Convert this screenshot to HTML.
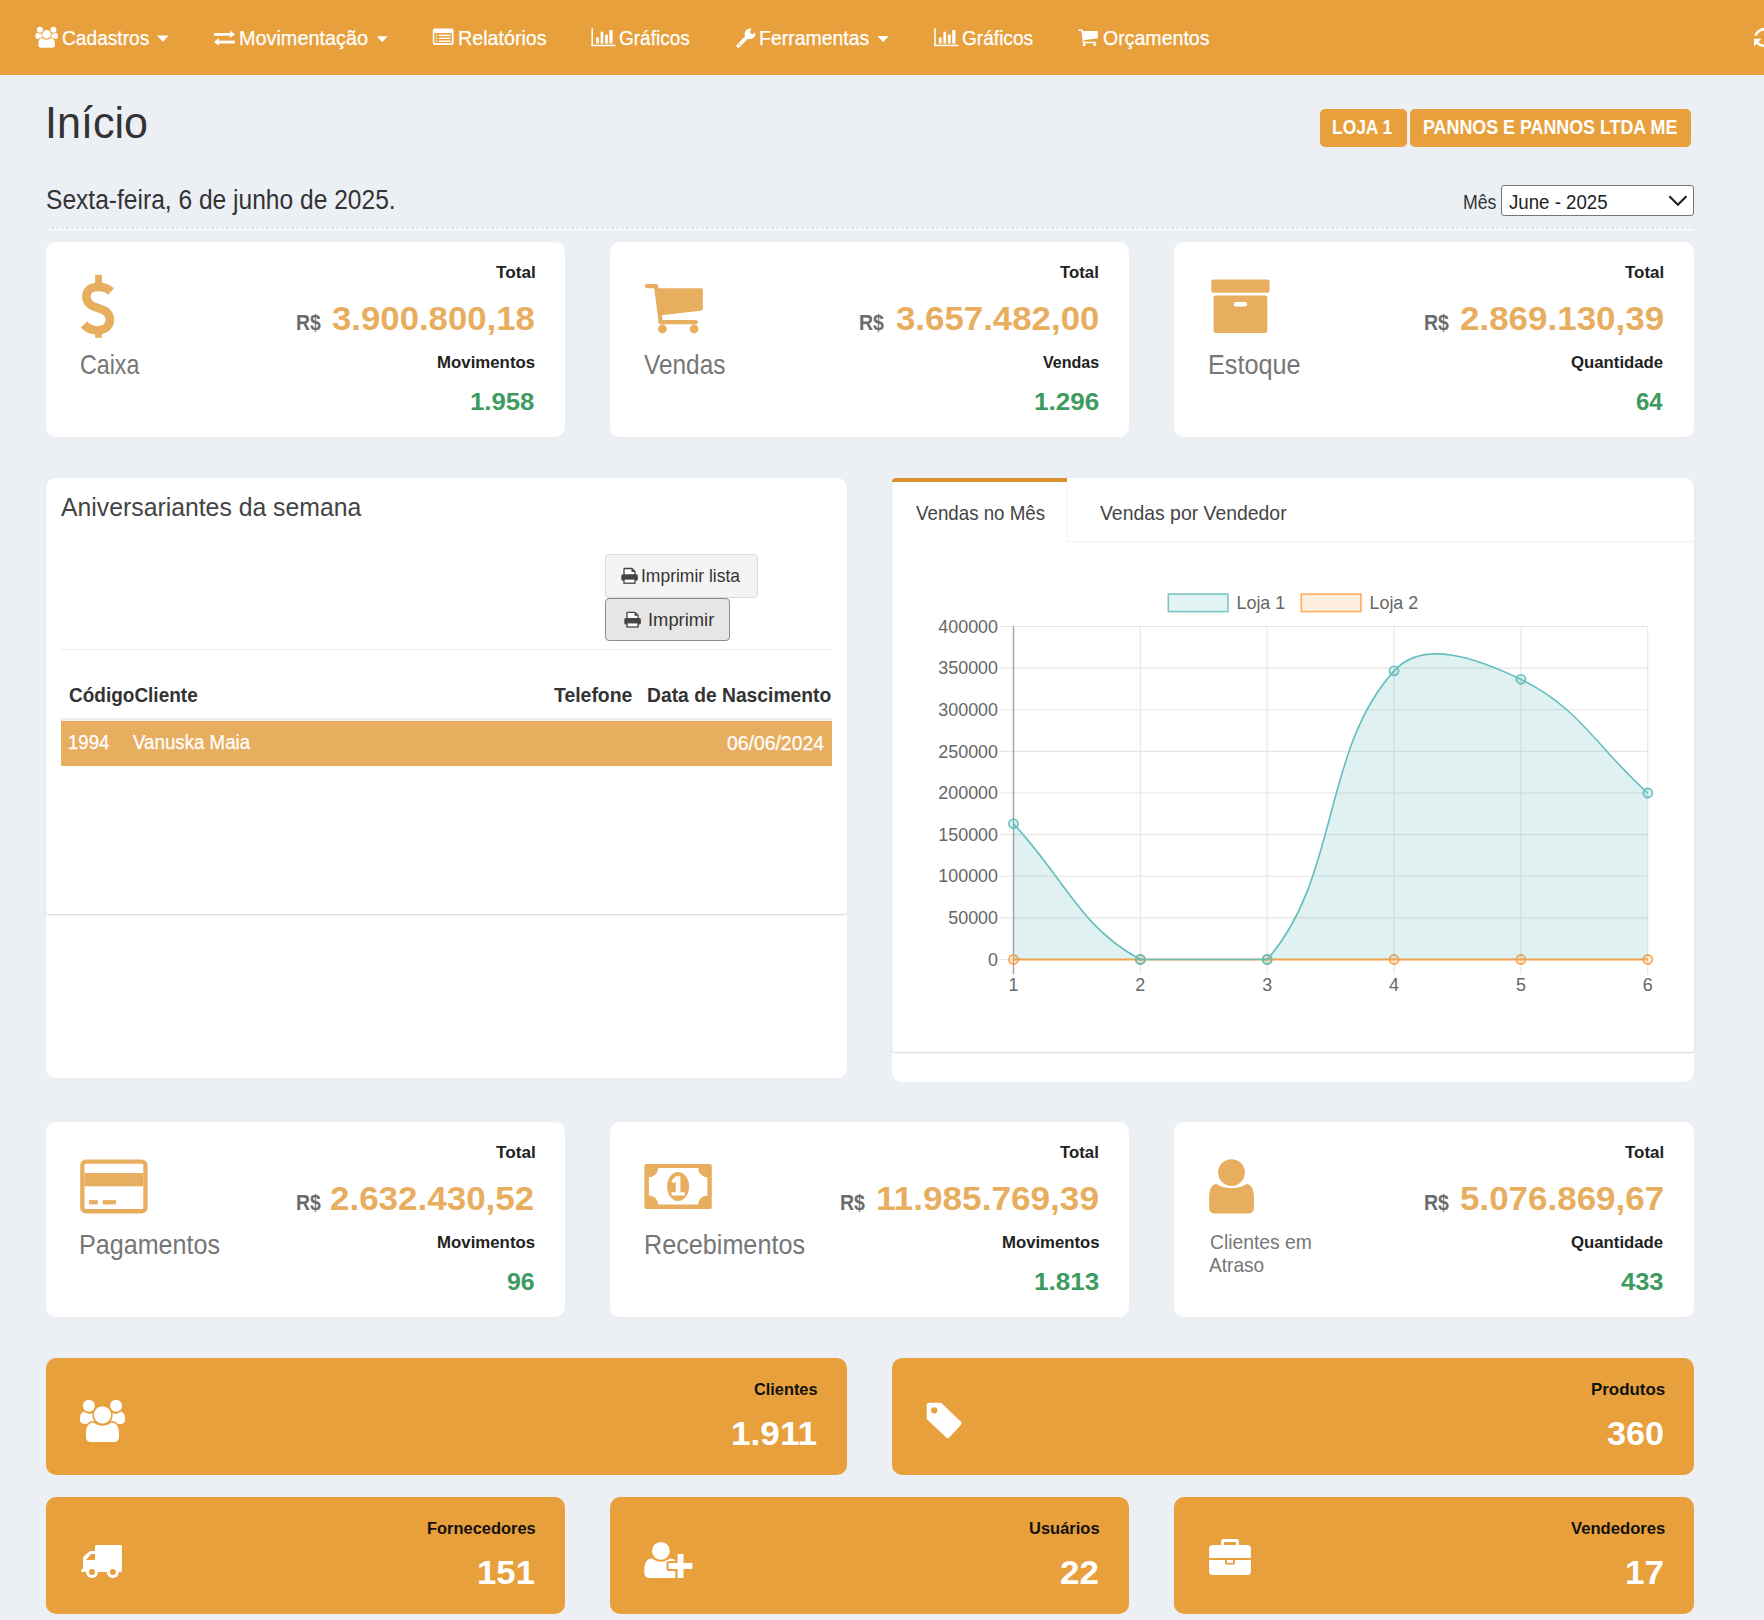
<!DOCTYPE html>
<html><head><meta charset="utf-8"><title>Início</title>
<style>
html,body{margin:0;padding:0}
body{width:1764px;height:1620px;overflow:hidden;position:relative;background:#ecf0f5;font-family:"Liberation Sans",sans-serif}
.b{position:absolute}
.t{position:absolute;white-space:nowrap;line-height:1;transform-origin:0 0;font-family:"Liberation Sans",sans-serif}
.n{-webkit-text-stroke:0.25px currentColor}
svg.ov{position:absolute;left:0;top:0}
svg text{font-family:"Liberation Sans",sans-serif;font-size:17.9px;fill:#666}
</style></head><body>
<div class="b" style="left:0px;top:0px;width:1764px;height:75px;background:#e8a03c"></div>
<div class="b" style="left:46px;top:228px;width:1648px;height:2px;background:#fff"></div>
<div class="b" style="left:46px;top:228px;width:1648px;height:1px;background:repeating-linear-gradient(90deg,#dadada 0 3px,#fff 3px 5px)"></div>
<div class="b" style="left:1320px;top:109px;width:87px;height:38px;background:#e8a03c;border-radius:5px"></div>
<div class="b" style="left:1410px;top:109px;width:281px;height:38px;background:#e8a03c;border-radius:5px"></div>
<div class="b" style="left:1501px;top:185px;width:193px;height:31px;background:#fff;border:1px solid #767676;border-radius:3px;box-sizing:border-box"></div>
<div class="b" style="left:46px;top:242px;width:519px;height:195px;background:#fff;border-radius:10px"></div>
<div class="b" style="left:610px;top:242px;width:519px;height:195px;background:#fff;border-radius:10px"></div>
<div class="b" style="left:1174px;top:242px;width:520px;height:195px;background:#fff;border-radius:10px"></div>
<div class="b" style="left:46px;top:1122px;width:519px;height:195px;background:#fff;border-radius:10px"></div>
<div class="b" style="left:610px;top:1122px;width:519px;height:195px;background:#fff;border-radius:10px"></div>
<div class="b" style="left:1174px;top:1122px;width:520px;height:195px;background:#fff;border-radius:10px"></div>
<div class="b" style="left:46px;top:478px;width:801px;height:600px;background:#fff;border-radius:10px"></div>
<div class="b" style="left:46px;top:478px;width:801px;height:436px;background:#fff;border-radius:10px 10px 3px 3px;box-shadow:0 1.5px 1.5px -0.5px rgba(0,0,0,.16)"></div>
<div class="b" style="left:605px;top:554px;width:153px;height:44px;background:#f4f4f4;border:1px solid #dcdcdc;border-radius:4px;box-sizing:border-box"></div>
<div class="b" style="left:605px;top:598px;width:125px;height:43px;background:#e6e6e6;border:1px solid #8c8c8c;border-radius:4px;box-sizing:border-box"></div>
<div class="b" style="left:61px;top:649px;width:771px;height:1px;background:#eeeeee"></div>
<div class="b" style="left:61px;top:718px;width:771px;height:3px;background:#f0f0f0"></div>
<div class="b" style="left:61px;top:721px;width:771px;height:45px;background:#e8ae60"></div>
<div class="b" style="left:892px;top:478px;width:802px;height:604px;background:#fff;border-radius:10px"></div>
<div class="b" style="left:892px;top:478px;width:802px;height:574px;background:#fff;border-radius:10px 10px 3px 3px;box-shadow:0 1.5px 1.5px -0.5px rgba(0,0,0,.16)"></div>
<div class="b" style="left:892px;top:478px;width:175px;height:4px;background:#d9912e;border-radius:10px 0 0 0"></div>
<div class="b" style="left:1067px;top:482px;width:1px;height:60px;background:#f2f2f2"></div>
<div class="b" style="left:1067px;top:541px;width:627px;height:1px;background:#f2f2f2"></div>
<div class="b" style="left:46px;top:1358px;width:801px;height:117px;background:#e8a03c;border-radius:10px"></div>
<div class="b" style="left:892px;top:1358px;width:802px;height:117px;background:#e8a03c;border-radius:10px"></div>
<div class="b" style="left:46px;top:1497px;width:519px;height:117px;background:#e8a03c;border-radius:10px"></div>
<div class="b" style="left:610px;top:1497px;width:519px;height:117px;background:#e8a03c;border-radius:10px"></div>
<div class="b" style="left:1174px;top:1497px;width:520px;height:117px;background:#e8a03c;border-radius:10px"></div>
<svg class="ov" width="1764" height="1620" viewBox="0 0 1764 1620">
<g transform="translate(35.4,26.8) scale(0.5)" fill="#fff">
<circle cx="8.9" cy="5.7" r="6"/><circle cx="36.1" cy="5.7" r="6"/>
<path d="M0,19 C0,14 2,11.8 4.5,11.8 C6.5,13.3 8,13.9 9.5,13.9 C11,13.9 12.5,13.3 14.5,11.8 L17,11.8 L17,24.1 L5,24.1 C2,24.1 0,22.5 0,20 Z"/>
<path d="M45,19 C45,14 43,11.8 40.5,11.8 C38.5,13.3 37,13.9 35.5,13.9 C34,13.9 32.5,13.3 30.5,11.8 L28,11.8 L28,24.1 L40,24.1 C43,24.1 45,22.5 45,20 Z"/>
<path d="M6,33 C6,26.5 9,22.6 13.5,22.6 C16.5,24.8 19.5,25.8 22.5,25.8 C25.5,25.8 28.5,24.8 31.5,22.6 C36,22.6 39,26.5 39,33 L39,37 C39,40 37,42 34,42 L11,42 C8,42 6,40 6,37 Z" stroke="#e8a03c" stroke-width="3.4" paint-order="stroke"/>
<circle cx="22.5" cy="14.8" r="8.6" stroke="#e8a03c" stroke-width="3.4" paint-order="stroke"/>
</g>
<g fill="#fff"><rect x="214" y="33" width="16.8" height="2.8"/><polygon points="230.2,30.4 234.9,34.4 230.2,37.9"/><rect x="218.4" y="40.6" width="16.4" height="2.9"/><polygon points="218.6,38.1 214,42 218.6,45.8"/></g>
<g><rect x="432.8" y="28.5" width="20.8" height="16.5" rx="2" fill="#fff"/><rect x="434.3" y="33.1" width="17.6" height="10" fill="#e8a03c"/><rect x="435.9" y="34.699999999999996" width="1.4" height="1.4" fill="#fff"/><rect x="439" y="34.699999999999996" width="11.8" height="1.4" fill="#fff"/><rect x="435.9" y="37.599999999999994" width="1.4" height="1.4" fill="#fff"/><rect x="439" y="37.599999999999994" width="11.8" height="1.4" fill="#fff"/><rect x="435.9" y="40.5" width="1.4" height="1.4" fill="#fff"/><rect x="439" y="40.5" width="11.8" height="1.4" fill="#fff"/></g>
<g fill="#fff" transform="translate(0.0,0)"><rect x="591.4" y="28.4" width="1.6" height="17.8"/><rect x="591.4" y="44.7" width="24.1" height="1.5"/><rect x="596.1" y="37.5" width="2.7" height="6"/><rect x="600.6" y="31.7" width="2.7" height="11.8"/><rect x="605.1" y="34.6" width="2.8" height="8.9"/><rect x="609.3" y="30" width="3.3" height="13.5"/></g>
<g fill="#fff" transform="translate(342.80000000000007,0)"><rect x="591.4" y="28.4" width="1.6" height="17.8"/><rect x="591.4" y="44.7" width="24.1" height="1.5"/><rect x="596.1" y="37.5" width="2.7" height="6"/><rect x="600.6" y="31.7" width="2.7" height="11.8"/><rect x="605.1" y="34.6" width="2.8" height="8.9"/><rect x="609.3" y="30" width="3.3" height="13.5"/></g>
<g fill="#fff"><circle cx="750" cy="33.8" r="5.4"/><line x1="746.5" y1="37.5" x2="738.3" y2="45.8" stroke="#fff" stroke-width="3.8" stroke-linecap="round"/><circle cx="752.6" cy="31.6" r="2.5" fill="#e8a03c"/><polygon points="752.6,31.6 752,26 758,26 757.5,31" fill="#e8a03c"/><circle cx="739.3" cy="44.6" r="0.8" fill="#e8a03c"/></g>
<g transform="translate(1078.2,29.6) scale(0.338)" fill="#fff" stroke="none">
<line x1="2" y1="2.1" x2="10.5" y2="2.1" stroke="#fff" stroke-width="4.2" stroke-linecap="round"/>
<line x1="11.2" y1="2.3" x2="15.8" y2="37.5" stroke="#fff" stroke-width="4.2" stroke-linecap="round"/>
<path d="M11,4.3 L56,4.3 Q58,4.3 58,6.5 L58,24.6 Q58,26.4 56,26.7 L18.5,31 L14.5,31 Z"/>
<rect x="13.3" y="36" width="39.9" height="4.2" rx="2.1"/>
<circle cx="17.6" cy="45" r="4.4"/><circle cx="49.2" cy="45" r="4.4"/>
</g>
<polygon fill="#fff" points="157,35.6 168.7,35.6 162.85,41.7"/>
<polygon fill="#fff" points="376.8,36.2 387.6,36.2 382.20000000000005,42.300000000000004"/>
<polygon fill="#fff" points="877.5,36 888.8,36 883.15,42.1"/>
<g fill="none" stroke="#fff" stroke-width="2.6"><path d="M1755.5,35.5 A9,9 0 0 1 1766,29.6"/><path d="M1757,42 A9,9 0 0 0 1766,45.6"/></g><polygon fill="#fff" points="1754,38.8 1754,46.4 1761.5,38.8"/>
<g fill="#e8ae5f"><rect x="95.1" y="274.8" width="6.8" height="10"/><rect x="95.1" y="328.5" width="6.8" height="9.3"/><path fill="none" stroke="#e8ae5f" stroke-width="8.6" d="M111,291.5 C107.5,288.3 103,286.9 98.5,286.9 C91,286.9 86.4,290.6 86.4,296.5 C86.4,311.5 109.9,304.5 109.9,319.8 C109.9,326.3 104.5,330.3 97.5,330.3 C92,330.3 87.5,328.3 84,324.5"/></g>
<g transform="translate(644.85,284) scale(1.0)" fill="#e8ae5f" stroke="none">
<line x1="2" y1="2.1" x2="10.5" y2="2.1" stroke="#e8ae5f" stroke-width="4.2" stroke-linecap="round"/>
<line x1="11.2" y1="2.3" x2="15.8" y2="37.5" stroke="#e8ae5f" stroke-width="4.2" stroke-linecap="round"/>
<path d="M11,4.3 L56,4.3 Q58,4.3 58,6.5 L58,24.6 Q58,26.4 56,26.7 L18.5,31 L14.5,31 Z"/>
<rect x="13.3" y="36" width="39.9" height="4.2" rx="2.1"/>
<circle cx="17.6" cy="45" r="4.4"/><circle cx="49.2" cy="45" r="4.4"/>
</g>
<g fill="#e8ae5f"><rect x="1211.3" y="279.5" width="58.3" height="13.2" rx="2.2"/><rect x="1213.6" y="295.4" width="53.7" height="37.6" rx="2.2"/><rect x="1233.8" y="302" width="13.4" height="4.5" rx="2.25" fill="#fff"/></g>
<g><rect x="80.2" y="1159.5" width="67.4" height="53.9" rx="6" fill="#e8ae5f"/><rect x="84.5" y="1163.8" width="58.8" height="45.3" rx="1.5" fill="#fff"/><rect x="84.5" y="1173" width="58.8" height="13.3" fill="#e8ae5f"/><rect x="89.1" y="1200.1" width="8.7" height="4.3" fill="#e8ae5f"/><rect x="102.7" y="1200.1" width="13.2" height="4.3" fill="#e8ae5f"/></g>
<g><rect x="644.4" y="1164" width="67.4" height="44.9" rx="2" fill="#e8ae5f"/><path fill="#fff" d="M658.1,1168 L698.1999999999999,1168 A9.2,9.2 0 0 0 707.4,1177.2 L707.4,1195.3999999999999 A9.2,9.2 0 0 0 698.1999999999999,1204.6 L658.1,1204.6 A9.2,9.2 0 0 0 648.9,1195.3999999999999 L648.9,1177.2 A9.2,9.2 0 0 0 658.1,1168 Z"/><ellipse cx="678.1" cy="1186.5" rx="11" ry="14.5" fill="#e8ae5f"/><path fill="#fff" d="M676,1176.3 L680.4,1176.3 L680.4,1192.3 L684.7,1192.3 L684.7,1195.4 L671.5,1195.4 L671.5,1192.3 L675.8,1192.3 L675.8,1181.5 L673.6,1183.5 L671.3,1180.8 Z"/></g>
<g fill="#e8ae5f"><path d="M1209.1,1198 C1209.1,1189 1212,1184 1216.5,1184 C1220,1186.6 1225,1188 1231.5,1188 C1238,1188 1243,1186.6 1246.5,1184 C1251,1184 1254,1189 1254,1198 L1254,1207.5 C1254,1211 1252,1213.5 1248,1213.5 L1215,1213.5 C1211,1213.5 1209.1,1211 1209.1,1207.5 Z"/><circle cx="1231.5" cy="1172.6" r="13.4" stroke="#fff" stroke-width="3.6" paint-order="stroke"/></g>
<g transform="translate(80,1400) scale(1.0)" fill="#fff">
<circle cx="8.9" cy="5.7" r="6"/><circle cx="36.1" cy="5.7" r="6"/>
<path d="M0,19 C0,14 2,11.8 4.5,11.8 C6.5,13.3 8,13.9 9.5,13.9 C11,13.9 12.5,13.3 14.5,11.8 L17,11.8 L17,24.1 L5,24.1 C2,24.1 0,22.5 0,20 Z"/>
<path d="M45,19 C45,14 43,11.8 40.5,11.8 C38.5,13.3 37,13.9 35.5,13.9 C34,13.9 32.5,13.3 30.5,11.8 L28,11.8 L28,24.1 L40,24.1 C43,24.1 45,22.5 45,20 Z"/>
<path d="M6,33 C6,26.5 9,22.6 13.5,22.6 C16.5,24.8 19.5,25.8 22.5,25.8 C25.5,25.8 28.5,24.8 31.5,22.6 C36,22.6 39,26.5 39,33 L39,37 C39,40 37,42 34,42 L11,42 C8,42 6,40 6,37 Z" stroke="#e8a03c" stroke-width="3.4" paint-order="stroke"/>
<circle cx="22.5" cy="14.8" r="8.6" stroke="#e8a03c" stroke-width="3.4" paint-order="stroke"/>
</g>
<g><polygon points="929,1405.1 940.3,1405.1 959.3,1423.3 947.8,1435.8 929,1418.1" fill="#fff" stroke="#fff" stroke-width="4.6" stroke-linejoin="round"/><circle cx="934.2" cy="1410.4" r="3.1" fill="#e8a03c"/></g>
<g fill="#fff"><rect x="95" y="1545" width="26.9" height="27.1" rx="1.5"/><path d="M83,1572 L83,1558.5 Q83,1557 84,1556 L89.3,1551.6 Q90,1551 91.5,1551 L96,1551 L96,1572 Z"/><rect x="81.2" y="1569" width="15" height="3.1" rx="1"/><polygon points="86,1560 91,1554 95,1554 95,1560" fill="#e8a03c"/><circle cx="92" cy="1572" r="6"/><circle cx="112.9" cy="1572" r="6"/><circle cx="92" cy="1572" r="3" fill="#e8a03c"/><circle cx="112.9" cy="1572" r="3" fill="#e8a03c"/></g>
<g fill="#fff"><path d="M644.4,1570 C644.4,1562.5 647,1558.5 651.8,1558.5 C654.5,1560.6 657.8,1561.6 660.9,1561.6 C664,1561.6 667.3,1560.6 670,1558.5 C673,1558.5 674.6,1559.5 675.5,1561 L675.5,1578 L650,1578 C646.5,1578 644.4,1576 644.4,1573 Z"/><circle cx="660.9" cy="1550.9" r="8.9" stroke="#e8a03c" stroke-width="3.4" paint-order="stroke"/><path d="M677.6,1554 L683.5,1554 L683.5,1563 L692.4,1563 L692.4,1568.9 L683.5,1568.9 L683.5,1578 L677.6,1578 L677.6,1568.9 L668.5,1568.9 L668.5,1563 L677.6,1563 Z" stroke="#e8a03c" stroke-width="4" paint-order="stroke" stroke-linejoin="round"/></g>
<g fill="#fff"><rect x="1209.1" y="1545" width="41.8" height="30" rx="3.5"/><rect x="1221.1" y="1539.1" width="17.8" height="8" rx="2.5"/><rect x="1224" y="1542" width="12" height="3" fill="#e8a03c"/><rect x="1209.1" y="1558" width="41.8" height="2" fill="#e8a03c"/><rect x="1225" y="1558" width="10" height="6.6" rx="1.5" fill="#e8a03c"/><rect x="1227" y="1560" width="6" height="2.8" fill="#fff"/></g>
<g transform="translate(621,568)"><path d="M3,7 L3,1 Q3,0.5 3.5,0.5 L11,0.5 L14,3.5 L14,7" fill="#fff" stroke="#444" stroke-width="1.3"/><path d="M10.5,0.8 L10.5,4 L13.8,4 Z" fill="#444"/><rect x="0.3" y="6.3" width="16.6" height="6.4" rx="1.6" fill="#444"/><rect x="3" y="11" width="11" height="4.2" fill="#fff" stroke="#444" stroke-width="1.3"/></g>
<g transform="translate(624,611.8)"><path d="M3,7 L3,1 Q3,0.5 3.5,0.5 L11,0.5 L14,3.5 L14,7" fill="#fff" stroke="#444" stroke-width="1.3"/><path d="M10.5,0.8 L10.5,4 L13.8,4 Z" fill="#444"/><rect x="0.3" y="6.3" width="16.6" height="6.4" rx="1.6" fill="#444"/><rect x="3" y="11" width="11" height="4.2" fill="#fff" stroke="#444" stroke-width="1.3"/></g>
<polyline points="1669.4,196.3 1677.9,204.8 1686.4,196.3" fill="none" stroke="#222" stroke-width="2.2"/>
<line x1="999.5" y1="959.5" x2="1647.75" y2="959.5" stroke="#e6e6e6" stroke-width="1.1"/>
<line x1="999.5" y1="917.875" x2="1647.75" y2="917.875" stroke="#e6e6e6" stroke-width="1.1"/>
<line x1="999.5" y1="876.25" x2="1647.75" y2="876.25" stroke="#e6e6e6" stroke-width="1.1"/>
<line x1="999.5" y1="834.625" x2="1647.75" y2="834.625" stroke="#e6e6e6" stroke-width="1.1"/>
<line x1="999.5" y1="793.0" x2="1647.75" y2="793.0" stroke="#e6e6e6" stroke-width="1.1"/>
<line x1="999.5" y1="751.375" x2="1647.75" y2="751.375" stroke="#e6e6e6" stroke-width="1.1"/>
<line x1="999.5" y1="709.75" x2="1647.75" y2="709.75" stroke="#e6e6e6" stroke-width="1.1"/>
<line x1="999.5" y1="668.125" x2="1647.75" y2="668.125" stroke="#e6e6e6" stroke-width="1.1"/>
<line x1="999.5" y1="626.5" x2="1647.75" y2="626.5" stroke="#e6e6e6" stroke-width="1.1"/>
<line x1="1013.5" y1="626.5" x2="1013.5" y2="974.3" stroke="#a6a6a6" stroke-width="1.5"/>
<line x1="1140.35" y1="626.5" x2="1140.35" y2="974.3" stroke="#e6e6e6" stroke-width="1.1"/>
<line x1="1267.2" y1="626.5" x2="1267.2" y2="974.3" stroke="#e6e6e6" stroke-width="1.1"/>
<line x1="1394.05" y1="626.5" x2="1394.05" y2="974.3" stroke="#e6e6e6" stroke-width="1.1"/>
<line x1="1520.9" y1="626.5" x2="1520.9" y2="974.3" stroke="#e6e6e6" stroke-width="1.1"/>
<line x1="1647.75" y1="626.5" x2="1647.75" y2="974.3" stroke="#e6e6e6" stroke-width="1.1"/>
<text x="998" y="965.70" text-anchor="end">0</text>
<text x="998" y="924.08" text-anchor="end">50000</text>
<text x="998" y="882.45" text-anchor="end">100000</text>
<text x="998" y="840.83" text-anchor="end">150000</text>
<text x="998" y="799.20" text-anchor="end">200000</text>
<text x="998" y="757.58" text-anchor="end">250000</text>
<text x="998" y="715.95" text-anchor="end">300000</text>
<text x="998" y="674.33" text-anchor="end">350000</text>
<text x="998" y="632.70" text-anchor="end">400000</text>
<text x="1013.5" y="990.6" text-anchor="middle">1</text>
<text x="1140.35" y="990.6" text-anchor="middle">2</text>
<text x="1267.2" y="990.6" text-anchor="middle">3</text>
<text x="1394.05" y="990.6" text-anchor="middle">4</text>
<text x="1520.9" y="990.6" text-anchor="middle">5</text>
<text x="1647.75" y="990.6" text-anchor="middle">6</text>
<rect x="1168.3" y="594.1" width="59.6" height="17.5" fill="rgba(100,183,183,0.2)" stroke="rgb(100,190,191)" stroke-width="1.6" opacity="0.85"/>
<rect x="1301.3" y="594.1" width="59.6" height="17.5" fill="rgba(255,159,64,0.2)" stroke="rgb(255,159,64)" stroke-width="1.6" opacity="0.85"/>
<text x="1236.5" y="608.8">Loja 1</text><text x="1369.5" y="608.8">Loja 2</text>
<line x1="1013.5" y1="959.5" x2="1647.75" y2="959.5" stroke="rgb(255,159,64)" stroke-width="1.8"/>
<circle cx="1013.5" cy="959.5" r="4.6" fill="rgba(255,159,64,0.2)" stroke="rgb(255,159,64)" stroke-width="1.6"/>
<circle cx="1140.35" cy="959.5" r="4.6" fill="rgba(255,159,64,0.2)" stroke="rgb(255,159,64)" stroke-width="1.6"/>
<circle cx="1267.2" cy="959.5" r="4.6" fill="rgba(255,159,64,0.2)" stroke="rgb(255,159,64)" stroke-width="1.6"/>
<circle cx="1394.05" cy="959.5" r="4.6" fill="rgba(255,159,64,0.2)" stroke="rgb(255,159,64)" stroke-width="1.6"/>
<circle cx="1520.9" cy="959.5" r="4.6" fill="rgba(255,159,64,0.2)" stroke="rgb(255,159,64)" stroke-width="1.6"/>
<circle cx="1647.75" cy="959.5" r="4.6" fill="rgba(255,159,64,0.2)" stroke="rgb(255,159,64)" stroke-width="1.6"/>
<path d="M1013.50,823.80 C1064.24,878.08 1080.05,927.25 1140.35,959.50 C1181.53,959.50 1238.08,959.50 1267.20,959.50 C1339.56,877.17 1321.73,750.75 1394.05,670.87 C1423.21,638.66 1477.53,658.40 1520.90,679.28 C1579.01,707.26 1597.01,747.51 1647.75,793.00 L1647.75,959.5 L1013.5,959.5 Z" fill="rgba(100,183,183,0.2)"/>
<path d="M1013.50,823.80 C1064.24,878.08 1080.05,927.25 1140.35,959.50 C1181.53,959.50 1238.08,959.50 1267.20,959.50 C1339.56,877.17 1321.73,750.75 1394.05,670.87 C1423.21,638.66 1477.53,658.40 1520.90,679.28 C1579.01,707.26 1597.01,747.51 1647.75,793.00" fill="none" stroke="rgb(100,190,191)" stroke-width="1.6"/>
<circle cx="1013.5" cy="823.8025" r="4.6" fill="rgba(100,183,183,0.2)" stroke="rgb(100,190,191)" stroke-width="1.6"/>
<circle cx="1140.35" cy="959.5" r="4.6" fill="rgba(100,183,183,0.2)" stroke="rgb(100,190,191)" stroke-width="1.6"/>
<circle cx="1267.2" cy="959.5" r="4.6" fill="rgba(100,183,183,0.2)" stroke="rgb(100,190,191)" stroke-width="1.6"/>
<circle cx="1394.05" cy="670.87225" r="4.6" fill="rgba(100,183,183,0.2)" stroke="rgb(100,190,191)" stroke-width="1.6"/>
<circle cx="1520.9" cy="679.2805000000001" r="4.6" fill="rgba(100,183,183,0.2)" stroke="rgb(100,190,191)" stroke-width="1.6"/>
<circle cx="1647.75" cy="793.0" r="4.6" fill="rgba(100,183,183,0.2)" stroke="rgb(100,190,191)" stroke-width="1.6"/>
</svg>
<span class="t n" style="left:62.08px;top:28.11px;font-size:20.78px;font-weight:normal;color:#fff;transform:scaleX(0.9222)">Cadastros</span>
<span class="t n" style="left:239.24px;top:28.11px;font-size:20.78px;font-weight:normal;color:#fff;transform:scaleX(0.9551)">Movimentação</span>
<span class="t n" style="left:457.95px;top:28.11px;font-size:20.78px;font-weight:normal;color:#fff;transform:scaleX(0.9479)">Relatórios</span>
<span class="t n" style="left:619.38px;top:28.11px;font-size:20.78px;font-weight:normal;color:#fff;transform:scaleX(0.9153)">Gráficos</span>
<span class="t n" style="left:759.36px;top:28.11px;font-size:20.78px;font-weight:normal;color:#fff;transform:scaleX(0.9362)">Ferramentas</span>
<span class="t n" style="left:962.28px;top:28.11px;font-size:20.78px;font-weight:normal;color:#fff;transform:scaleX(0.9193)">Gráficos</span>
<span class="t n" style="left:1102.90px;top:28.11px;font-size:20.78px;font-weight:normal;color:#fff;transform:scaleX(0.9413)">Orçamentos</span>
<span class="t" style="left:45.25px;top:101.59px;font-size:43.60px;font-weight:normal;color:#333;transform:scaleX(0.9884)">Início</span>
<span class="t" style="left:45.58px;top:186.56px;font-size:26.74px;font-weight:normal;color:#333;transform:scaleX(0.9189)">Sexta-feira, 6 de junho de 2025.</span>
<span class="t" style="left:1462.62px;top:191.52px;font-size:20.06px;font-weight:normal;color:#333;transform:scaleX(0.8820)">Mês</span>
<span class="t" style="left:1508.80px;top:191.52px;font-size:20.06px;font-weight:normal;color:#222;transform:scaleX(0.9316)">June - 2025</span>
<span class="t" style="left:1332.37px;top:117.23px;font-size:20.87px;font-weight:bold;color:#fff;transform:scaleX(0.8339)">LOJA 1</span>
<span class="t" style="left:1423.04px;top:117.23px;font-size:20.87px;font-weight:bold;color:#fff;transform:scaleX(0.8561)">PANNOS E PANNOS LTDA ME</span>
<span class="t" style="left:80.34px;top:351.84px;font-size:26.89px;font-weight:normal;color:#767676;transform:scaleX(0.8648)">Caixa</span>
<span class="t" style="left:495.80px;top:265.19px;font-size:16.67px;font-weight:bold;color:#222;transform:scaleX(1.0311)">Total</span>
<span class="t" style="left:295.63px;top:311.83px;font-size:22.17px;font-weight:bold;color:#6c6c6c;transform:scaleX(0.8750)">R$</span>
<span class="t" style="left:332.00px;top:302.02px;font-size:33.77px;font-weight:bold;color:#e8ae5f;transform:scaleX(1.0291)">3.900.800,18</span>
<span class="t" style="left:437.43px;top:353.88px;font-size:17.39px;font-weight:bold;color:#222;transform:scaleX(0.9679)">Movimentos</span>
<span class="t" style="left:470.25px;top:390.27px;font-size:24.49px;font-weight:bold;color:#3e9b5f;transform:scaleX(1.0511)">1.958</span>
<span class="t" style="left:644.40px;top:351.84px;font-size:26.89px;font-weight:normal;color:#767676;transform:scaleX(0.9078)">Vendas</span>
<span class="t" style="left:1060.30px;top:265.19px;font-size:16.67px;font-weight:bold;color:#222;transform:scaleX(1.0073)">Total</span>
<span class="t" style="left:859.42px;top:311.83px;font-size:22.17px;font-weight:bold;color:#6c6c6c;transform:scaleX(0.8821)">R$</span>
<span class="t" style="left:895.90px;top:302.02px;font-size:33.77px;font-weight:bold;color:#e8ae5f;transform:scaleX(1.0316)">3.657.482,00</span>
<span class="t" style="left:1042.90px;top:353.88px;font-size:17.39px;font-weight:bold;color:#222;transform:scaleX(0.9239)">Vendas</span>
<span class="t" style="left:1033.84px;top:390.27px;font-size:24.49px;font-weight:bold;color:#3e9b5f;transform:scaleX(1.0645)">1.296</span>
<span class="t" style="left:1208.12px;top:351.84px;font-size:26.89px;font-weight:normal;color:#767676;transform:scaleX(0.9397)">Estoque</span>
<span class="t" style="left:1625.00px;top:265.19px;font-size:16.67px;font-weight:bold;color:#222;transform:scaleX(1.0152)">Total</span>
<span class="t" style="left:1424.12px;top:311.83px;font-size:22.17px;font-weight:bold;color:#6c6c6c;transform:scaleX(0.8821)">R$</span>
<span class="t" style="left:1459.76px;top:302.02px;font-size:33.77px;font-weight:bold;color:#e8ae5f;transform:scaleX(1.0354)">2.869.130,39</span>
<span class="t" style="left:1571.00px;top:353.88px;font-size:17.39px;font-weight:bold;color:#222;transform:scaleX(0.9645)">Quantidade</span>
<span class="t" style="left:1636.00px;top:390.27px;font-size:24.49px;font-weight:bold;color:#3e9b5f;transform:scaleX(0.9777)">64</span>
<span class="t" style="left:78.73px;top:1231.84px;font-size:26.89px;font-weight:normal;color:#767676;transform:scaleX(0.9349)">Pagamentos</span>
<span class="t" style="left:495.80px;top:1145.19px;font-size:16.67px;font-weight:bold;color:#222;transform:scaleX(1.0311)">Total</span>
<span class="t" style="left:295.63px;top:1191.83px;font-size:22.17px;font-weight:bold;color:#6c6c6c;transform:scaleX(0.8750)">R$</span>
<span class="t" style="left:330.36px;top:1182.02px;font-size:33.77px;font-weight:bold;color:#e8ae5f;transform:scaleX(1.0359)">2.632.430,52</span>
<span class="t" style="left:437.43px;top:1233.88px;font-size:17.39px;font-weight:bold;color:#222;transform:scaleX(0.9679)">Movimentos</span>
<span class="t" style="left:506.70px;top:1270.27px;font-size:24.49px;font-weight:bold;color:#3e9b5f;transform:scaleX(1.0144)">96</span>
<span class="t" style="left:643.53px;top:1231.84px;font-size:26.89px;font-weight:normal;color:#767676;transform:scaleX(0.9371)">Recebimentos</span>
<span class="t" style="left:1060.30px;top:1145.19px;font-size:16.67px;font-weight:bold;color:#222;transform:scaleX(1.0073)">Total</span>
<span class="t" style="left:840.42px;top:1191.83px;font-size:22.17px;font-weight:bold;color:#6c6c6c;transform:scaleX(0.8821)">R$</span>
<span class="t" style="left:876.32px;top:1182.02px;font-size:33.77px;font-weight:bold;color:#e8ae5f;transform:scaleX(1.0417)">11.985.769,39</span>
<span class="t" style="left:1001.54px;top:1233.88px;font-size:17.39px;font-weight:bold;color:#222;transform:scaleX(0.9629)">Movimentos</span>
<span class="t" style="left:1033.84px;top:1270.27px;font-size:24.49px;font-weight:bold;color:#3e9b5f;transform:scaleX(1.0645)">1.813</span>
<span class="t" style="left:1625.00px;top:1145.19px;font-size:16.67px;font-weight:bold;color:#222;transform:scaleX(1.0152)">Total</span>
<span class="t" style="left:1424.12px;top:1191.83px;font-size:22.17px;font-weight:bold;color:#6c6c6c;transform:scaleX(0.8821)">R$</span>
<span class="t" style="left:1459.76px;top:1182.02px;font-size:33.77px;font-weight:bold;color:#e8ae5f;transform:scaleX(1.0354)">5.076.869,67</span>
<span class="t" style="left:1571.00px;top:1233.88px;font-size:17.39px;font-weight:bold;color:#222;transform:scaleX(0.9645)">Quantidade</span>
<span class="t" style="left:1621.10px;top:1270.27px;font-size:24.49px;font-weight:bold;color:#3e9b5f;transform:scaleX(1.0414)">433</span>
<span class="t" style="left:1209.70px;top:1232.61px;font-size:19.48px;font-weight:normal;color:#767676;transform:scaleX(0.9914)">Clientes em</span>
<span class="t" style="left:1209.00px;top:1255.40px;font-size:20.20px;font-weight:normal;color:#767676;transform:scaleX(0.9464)">Atraso</span>
<span class="t" style="left:60.90px;top:494.48px;font-size:26.02px;font-weight:normal;color:#444;transform:scaleX(0.9525)">Aniversariantes da semana</span>
<span class="t" style="left:641.43px;top:567.24px;font-size:18.02px;font-weight:normal;color:#333;transform:scaleX(0.9700)">Imprimir lista</span>
<span class="t" style="left:647.56px;top:611.69px;font-size:17.73px;font-weight:normal;color:#333;transform:scaleX(1.0354)">Imprimir</span>
<span class="t" style="left:68.90px;top:685.35px;font-size:20.14px;font-weight:bold;color:#333;transform:scaleX(0.9435)">CódigoCliente</span>
<span class="t" style="left:553.50px;top:684.83px;font-size:20.87px;font-weight:bold;color:#333;transform:scaleX(0.9304)">Telefone</span>
<span class="t" style="left:646.58px;top:684.83px;font-size:20.87px;font-weight:bold;color:#333;transform:scaleX(0.9239)">Data de Nascimento</span>
<span class="t n" style="left:67.97px;top:733.44px;font-size:19.91px;font-weight:normal;color:#fff;transform:scaleX(0.9326)">1994</span>
<span class="t n" style="left:132.80px;top:733.44px;font-size:19.91px;font-weight:normal;color:#fff;transform:scaleX(0.9395)">Vanuska Maia</span>
<span class="t n" style="left:726.70px;top:733.84px;font-size:19.33px;font-weight:normal;color:#fff;transform:scaleX(1.0022)">06/06/2024</span>
<span class="t" style="left:915.70px;top:503.42px;font-size:20.06px;font-weight:normal;color:#444;transform:scaleX(0.9344)">Vendas no Mês</span>
<span class="t" style="left:1099.50px;top:503.42px;font-size:20.06px;font-weight:normal;color:#444;transform:scaleX(0.9676)">Vendas por Vendedor</span>
<span class="t" style="left:754.00px;top:1381.02px;font-size:17.10px;font-weight:bold;color:#111;transform:scaleX(0.9547)">Clientes</span>
<span class="t" style="left:730.72px;top:1416.69px;font-size:33.91px;font-weight:bold;color:#fff;transform:scaleX(1.0384)">1.911</span>
<span class="t" style="left:1590.81px;top:1381.02px;font-size:17.10px;font-weight:bold;color:#111;transform:scaleX(0.9890)">Produtos</span>
<span class="t" style="left:1606.80px;top:1416.69px;font-size:33.91px;font-weight:bold;color:#fff;transform:scaleX(1.0087)">360</span>
<span class="t" style="left:426.64px;top:1520.02px;font-size:17.10px;font-weight:bold;color:#111;transform:scaleX(0.9620)">Fornecedores</span>
<span class="t" style="left:476.75px;top:1555.69px;font-size:33.91px;font-weight:bold;color:#fff;transform:scaleX(1.0258)">151</span>
<span class="t" style="left:1029.44px;top:1520.02px;font-size:17.10px;font-weight:bold;color:#111;transform:scaleX(0.9645)">Usuários</span>
<span class="t" style="left:1060.47px;top:1555.69px;font-size:33.91px;font-weight:bold;color:#fff;transform:scaleX(1.0319)">22</span>
<span class="t" style="left:1570.70px;top:1520.02px;font-size:17.10px;font-weight:bold;color:#111;transform:scaleX(0.9731)">Vendedores</span>
<span class="t" style="left:1624.83px;top:1555.69px;font-size:33.91px;font-weight:bold;color:#fff;transform:scaleX(1.0357)">17</span>
</body></html>
